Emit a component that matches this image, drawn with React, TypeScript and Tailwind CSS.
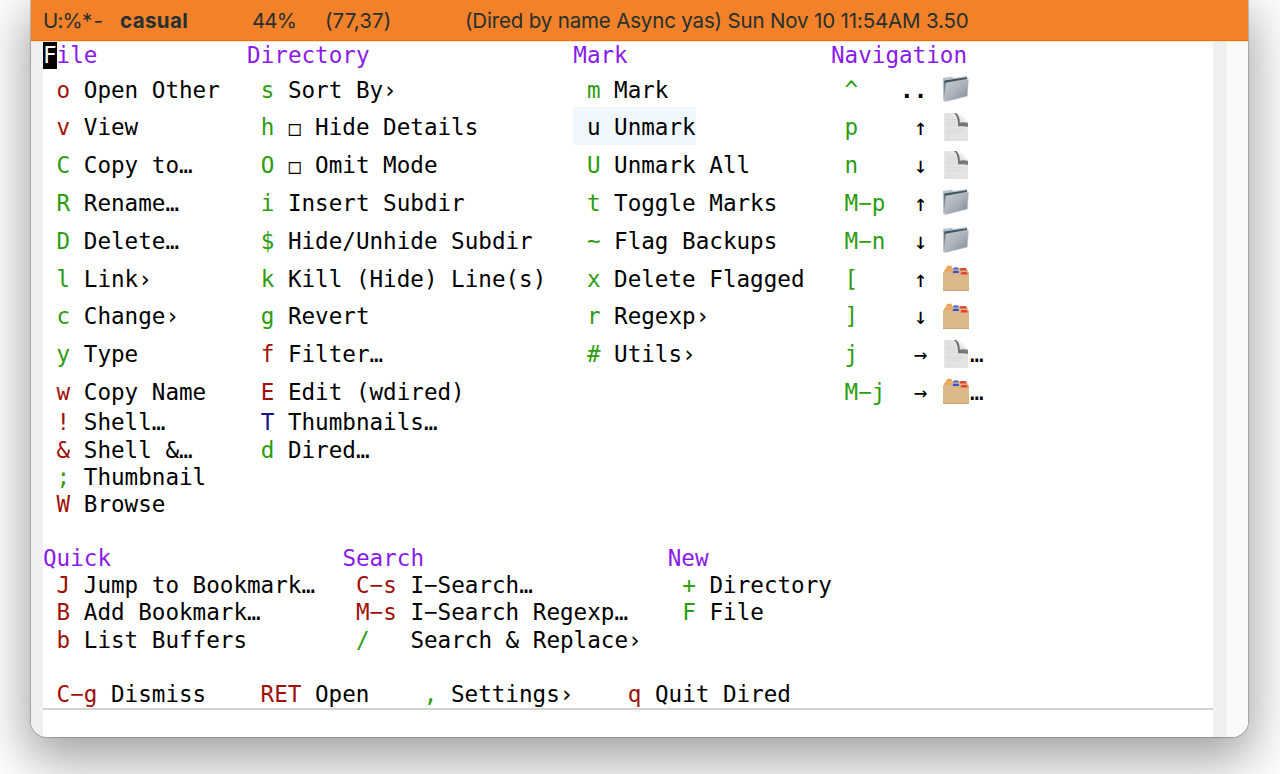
import React from "react";

type Tone = "r" | "g" | "b" | "k";
type Item = { k: string; t: string; c: Tone; hl?: boolean };

const tones: Record<Tone, string> = {
  r: "text-[#a01008]",
  g: "text-[#2c9c10]",
  b: "text-[#14148c]",
  k: "text-black",
};

const parse = (rows: string[]): Item[] =>
  rows.map((s) => {
    const [c, k, ...rest] = s.split(" ");
    return { c: c as Tone, k, t: rest.join(" "), hl: c === "k" };
  });

const file = parse(["r o Open Other", "r v View", "g C Copy to…", "g R Rename…", "g D Delete…", "g l Link›", "g c Change›", "g y Type", "r w Copy Name", "r ! Shell…", "r & Shell &…", "g ; Thumbnail", "r W Browse"]);
const directory = parse(["g s Sort By›", "g h □ Hide Details", "g O □ Omit Mode", "g i Insert Subdir", "g $ Hide/Unhide Subdir", "g k Kill (Hide) Line(s)", "g g Revert", "r f Filter…", "r E Edit (wdired)", "b T Thumbnails…", "g d Dired…"]);
const mark = parse(["g m Mark", "k u Unmark", "g U Unmark All", "g t Toggle Marks", "g ~ Flag Backups", "g x Delete Flagged", "g r Regexp›", "g # Utils›"]);
const quick = parse(["r J Jump to Bookmark…", "r B Add Bookmark…", "r b List Buffers"]);
const search = parse(["r C-s I-Search…", "r M-s I-Search Regexp…", "g / Search & Replace›"]);
const fresh = parse(["g + Directory", "g F File"]);

const nav: [string, string, "folder" | "page" | "tabs", string][] = [
  ["^", "..", "folder", ""],
  ["p", " ↑", "page", ""],
  ["n", " ↓", "page", ""],
  ["M-p", " ↑", "folder", ""],
  ["M-n", " ↓", "folder", ""],
  ["[", " ↑", "tabs", ""],
  ["]", " ↓", "tabs", ""],
  ["j", " →", "page", "…"],
  ["M-j", " →", "tabs", "…"],
];

const dash = (s: string) => s.replace("-", "−");

function Folder() {
  return (
    <svg viewBox="0 0 28 28" className="mt-0.5 h-7 w-7 shrink-0">
      <defs>
        <linearGradient id="fold" x1="0" y1="0" x2="1" y2="1">
          <stop offset="0" stopColor="#c6cbd2" />
          <stop offset=".5" stopColor="#acb2bb" />
          <stop offset="1" stopColor="#7f8792" />
        </linearGradient>
      </defs>
      <path d="M.8 3.5 1.600 2.800 10 1.800l1.500 1.100L25 1v5L4 25.5 1.200 26Z" fill="#b4c3ce" />
      <path d="M2.300 5.600 25.200 2.200v18L2.800 26Z" fill="#43545f" />
      <path d="M3.900 8 26.600 4 25.400 21.2 2.600 27Z" fill="url(#fold)" stroke="#d9dee3" strokeWidth=".5" />
    </svg>
  );
}

function Page() {
  return (
    <svg viewBox="0 0 28 28" className="mt-0.5 h-7 w-7 shrink-0">
      <defs>
        <linearGradient id="curl" x1="0" y1="1" x2="1" y2="0">
          <stop offset="0" stopColor="#c4c4c4" />
          <stop offset=".5" stopColor="#efefef" />
          <stop offset="1" stopColor="#f8f8f8" />
        </linearGradient>
        <linearGradient id="shade" x1="0" y1="0" x2="1" y2="1">
          <stop offset="0" stopColor="#5a5a5a" />
          <stop offset="1" stopColor="#808080" />
        </linearGradient>
      </defs>
      <path d="M2 0h12l12 14v14H2Z" fill="#e4e4e4" />
      <path d="M4 3h4M4 6.500h10M4 8.500h10M4 10.500h10M4 12.500h10M4 16.500h18M4 18.500h18M4 20.500h12M4 24h4M4 26h6" stroke="#d6d6d6" strokeWidth=".8" />
      <path d="M12 0C15 2 16 6 16.200 13.500c3-.6 6.500-.4 9.800.5V9.500L14.500 0Z" fill="url(#shade)" />
      <path d="M13.800 0C19 .8 25 5 26 10c-2.800-1-5.200-1-8.200-.2C17.800 5.500 17 2.500 13.800 0Z" fill="url(#curl)" />
    </svg>
  );
}

function Tabs() {
  return (
    <svg viewBox="0 0 28 28" className="mt-0.5 h-7 w-7 shrink-0">
      <path d="M1 9 4 4h20l3 5v5H1Z" fill="#d9b582" />
      <path d="M4.500 3 5.500 1.800h3.500l1 1.200v1.200H4.500Z" fill="#f2a04a" />
      <path d="M2.500 6.400 3.500 5.400h5l1 1v1.200h-7Z" fill="#f5a34d" />
      <path d="M11.300 4.200 12.300 3.200h3l1 1v1.200h-5Z" fill="#5568e6" />
      <path d="M10.800 7.600 11.800 6.800h4l1 .8v1.400h-6Z" fill="#2e50dd" />
      <path d="M18 5 19 4h4.500l1 1v1.400H18Z" fill="#dc493c" />
      <path d="M18.800 8.900l1-.8h4.700l1 .8v1.500h-6.700Z" fill="#e94032" />
      <path d="M1 8.800h8.500l1 1.100h7l1 1.100H27V26q0 1-1 1H2q-1 0-1-1Z" fill="#dbb98b" />
      <path d="M1 25.800h26V27H1Z" fill="#cba878" />
    </svg>
  );
}

const icons = { folder: <Folder />, page: <Page />, tabs: <Tabs /> };

function Label({ text }: { text: string }) {
  if (!text.startsWith("□")) return <span>{dash(text)}</span>;
  return (
    <span className="flex items-center">
      <span className="w-[13.6px] pt-px text-center text-[19.5px]">□</span>
      <span>{text.slice(1)}</span>
    </span>
  );
}

function Line({ item, tall, wide }: { item: Item; tall?: boolean; wide?: boolean }) {
  return (
    <div className={`flex w-fit items-center whitespace-pre pl-[13.6px] ${tall ? "h-[37.8px] pt-[4px]" : "h-[27.2px]"} ${item.hl ? "bg-[#f0f7ff]" : ""}`}>
      <span className={`${wide ? "w-[54.4px]" : "w-[27.2px]"} ${tones[item.c]}`}>{dash(item.k)}</span>
      <Label text={item.t} />
    </div>
  );
}

function Group({ title, items, tall = 0, wide, cursor }: { title: string; items: Item[]; tall?: number; wide?: boolean; cursor?: boolean }) {
  return (
    <section>
      <h2 className="flex h-[27.2px] items-center text-[#8a1aec]">
        {cursor ? (
          <>
            <span className="h-[27px] bg-black leading-[27px] text-white">{title[0]}</span>
            {title.slice(1)}
          </>
        ) : (
          title
        )}
      </h2>
      {items.map((it, i) => (
        <Line key={it.k} item={it} tall={i < tall} wide={wide} />
      ))}
    </section>
  );
}

export default function App() {
  return (
    <div className="h-[774px] w-[1280px] overflow-hidden bg-white">
      <div className="ml-[31px] flex h-[737px] w-[1216.5px] flex-col overflow-hidden rounded-b-[16px] bg-white shadow-[0_18px_50px_6px_rgba(0,0,0,0.36),0_0_1px_1px_rgba(0,0,0,0.2)]">
        <header className="flex h-[42px] shrink-0 items-center whitespace-pre border-b border-[#f3e3d6] bg-[#f28129] pl-3 pt-px font-['Inter',sans-serif] text-[20.5px] text-[#26302f] shadow-[inset_0_-1px_0_#ef6f0c]">
          <span className="w-[77px] tracking-[-0.8px]">U:%*<span className="pl-0.5">-</span></span>
          <span className="w-[132px] font-bold tracking-[0.4px]">casual</span>
          <span className="w-[73px] tracking-[-0.9px]">44%</span>
          <span className="w-[140px] tracking-[0.1px]">(77,37)</span>
          <span className="tracking-[-0.16px]">(Dired by name Async yas) Sun Nov 10 11:54AM 3.50</span>
        </header>
        <div className="flex min-h-0 flex-1">
          <div className="w-3 shrink-0 bg-[#f0f0f0]" />
          <main className="w-[1170px] shrink-0 font-['DejaVu_Sans_Mono',monospace] text-[22.6px] leading-[27px] text-black">
            <div className="h-[668px] border-b-2 border-[#d2d2d2]">
              <div className="grid h-[503px] grid-cols-[204.1px_326.2px_257.700px_1fr] items-start">
                <Group title="File" items={file} tall={9} cursor />
                <Group title="Directory" items={directory} tall={9} />
                <Group title="Mark" items={mark} tall={9} />
                <section>
                  <h2 className="flex h-[27.2px] items-center text-[#8a1aec]">Navigation</h2>
                  {nav.map(([k, a, icon, e]) => (
                    <div key={k} className="flex h-[37.8px] items-center whitespace-pre pl-[13.6px]">
                      <span className="w-[55.5px] pt-[4px] text-[#2c9c10]">{dash(k)}</span>
                      <span className={`w-[41.9px] pt-[4px] ${a === ".." ? "font-bold" : ""}`}>{a}</span>
                      {icons[icon]}
                      <span className="pt-[4px]">{e}</span>
                    </div>
                  ))}
                </section>
              </div>
              <div className="grid h-[136px] grid-cols-[299.4px_325.3px_1fr] items-start">
                <Group title="Quick" items={quick} />
                <Group title="Search" items={search} wide />
                <div className="[&_div]:pl-[14.6px]">
                  <Group title="New" items={fresh} />
                </div>
              </div>
              <div className="flex h-[27px] items-center whitespace-pre pl-[13.6px]">
                <span className="w-[54.4px] text-[#a01008]">C−g</span>
                <span className="w-[149.6px]">Dismiss</span>
                <span className="w-[54.4px] text-[#a01008]">RET</span>
                <span className="w-[108.800px]">Open</span>
                <span className="w-[27.2px] text-[#2c9c10]">,</span>
                <span className="w-[176.8px]">Settings›</span>
                <span className="w-[27.2px] text-[#a01008]">q</span>
                <span>Quit Dired</span>
              </div>
            </div>
          </main>
          <div className="w-[13px] shrink-0 border-r border-[#e8e8e8] bg-[#f0f0f0]" />
          <div className="flex-1 bg-[#fafafa]" />
        </div>
      </div>
    </div>
  );
}
